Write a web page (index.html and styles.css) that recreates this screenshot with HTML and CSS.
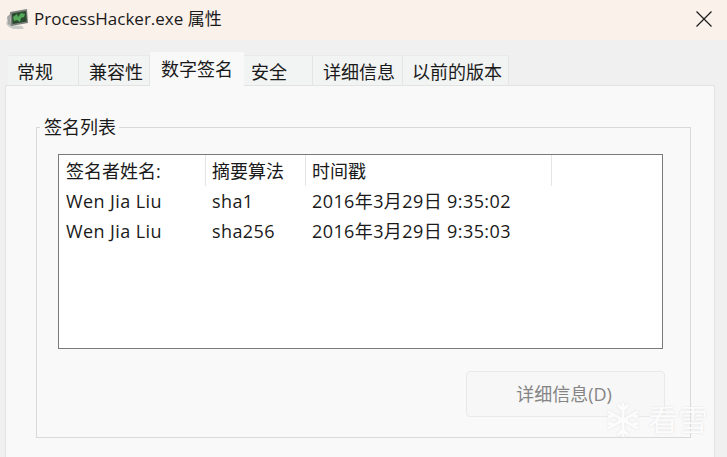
FILE: index.html
```html
<!DOCTYPE html>
<html lang="en">
  <head>
    <meta charset="UTF-8" />
    <title>ProcessHacker.exe 属性</title>
    <link rel="stylesheet" href="styles.css">
  </head>
  <body>
    <div class="dialog">
      <div class="title-bar">
        <svg class="app-icon" width="22" height="20" viewBox="0 0 22 20">
          <path fill="#c9cbc9" d="M1 12l4 1 1 3 10 1 2 3H7l-4-2-3-3z"></path>
          <path fill="#7c807c" d="M4 3l17-3 1 14-17 3z"></path>
          <path fill="#2a4a2e" d="M6 4.500l14-2.600 .8 10.500L6.500 15z"></path>
          <path fill="#56a85a" d="M7 8l4-3 1 3 3-4 4 1-1 3-3 1-1 4-3-2-3 1z"></path>
          <path fill="#a3a5a3" d="M1 8l3-3 1 12-3-2z"></path>
        </svg>
        <span class="title-text">ProcessHacker.exe 属性</span>
        <svg class="close-btn" width="16" height="16" viewBox="0 0 16 16">
          <path d="M0.500 0.500L15.500 15.500M15.500 0.500L0.500 15.500" stroke="#1a1a1a" stroke-width="1.200" fill="none"></path>
        </svg>
      </div>

      <div class="tabs">
        <div class="tab tab-general">常规</div>
        <div class="tab tab-compat">兼容性</div>
        <div class="tab tab-active">数字签名</div>
        <div class="tab tab-security">安全</div>
        <div class="tab tab-details">详细信息</div>
        <div class="tab tab-previous">以前的版本</div>
      </div>

      <div class="panel">
        <fieldset class="group">
          <legend class="group-label">签名列表</legend>
          <div class="list">
            <div class="list-row list-header">
              <div class="col col-name">签名者姓名:</div>
              <div class="col col-algo">摘要算法</div>
              <div class="col col-time">时间戳</div>
            </div>
            <div class="list-row">
              <div class="col col-name">Wen Jia Liu</div>
              <div class="col col-algo">sha1</div>
              <div class="col col-time">2016年3月29日 9:35:02</div>
            </div>
            <div class="list-row">
              <div class="col col-name">Wen Jia Liu</div>
              <div class="col col-algo">sha256</div>
              <div class="col col-time">2016年3月29日 9:35:03</div>
            </div>
          </div>
          <div class="actions">
            <button class="details-btn" type="button" disabled>详细信息(D)</button>
          </div>
        </fieldset>
      </div>

      <div class="watermark">
        <svg class="watermark-flake" width="34" height="36" viewBox="0 0 34 36">
          <path d="M17 1V35M2 9.500L32 26.500M32 9.500L2 26.500M17 8l-5-5M17 8l5-5M17 28l-5 5M17 28l5 5M8 13L2 15M26 13l6 2M8 23l-6-2M26 23l6-2M12 18h10" stroke="#fcfcfc" stroke-width="3" fill="none"></path>
        </svg>
        <span class="watermark-text">看雪</span>
      </div>
    </div>
  </body>
</html>
```

FILE: styles.css
```css
html,
body {
  margin: 0;
  padding: 0;
  height: 100%;
  overflow: hidden;
}

body {
  font-family: "Open Sans", "Noto Sans CJK SC", sans-serif;
  font-size: 18px;
  color: #1a1a1a;
  background-color: #f0f0f0;
}

.dialog {
  position: relative;
  height: 457px;
  display: flex;
  flex-direction: column;
}

/* Title bar */
.title-bar {
  height: 40px;
  flex-shrink: 0;
  padding: 0 15px 3px 6px;
  box-sizing: border-box;
  background-color: #faf1ea;
  display: flex;
  align-items: center;
}

.app-icon {
  margin-right: 6px;
}

.title-text {
  flex: 1;
  font-size: 17px;
  line-height: 24px;
}

/* Tabs */
.tabs {
  height: 30px;
  margin-top: 15px;
  padding-left: 8px;
  display: flex;
  align-items: flex-end;
}

.tab {
  height: 30px;
  box-sizing: border-box;
  padding-left: 9px;
  line-height: 33px;
  white-space: nowrap;
  background-color: #f2f3f3;
  border-right: 1px solid #e5e5e5;
  border-top: 1px solid #eaeaea;
}

.tab-general {
  width: 71px;
}

.tab-compat {
  width: 71px;
  padding-left: 10px;
}

.tab-active {
  width: 94px;
  height: 34px;
  margin-bottom: -1px;
  padding-left: 11px;
  line-height: 34px;
  background-color: #f9f9f9;
  border: none;
  position: relative;
  z-index: 1;
}

.tab-security {
  width: 69px;
  padding-left: 7px;
}

.tab-details {
  width: 90px;
  padding-left: 10px;
}

.tab-previous {
  width: 106px;
  padding-left: 9px;
}

/* Panel */
.panel {
  flex: 1;
  margin-left: 5px;
  width: 710px;
  box-sizing: border-box;
  padding: 29px 23px 19px 30px;
  background-color: #f9f9f9;
  border: 1px solid #e3e3e3;
  border-bottom: none;
  display: flex;
}

.group {
  flex: 1;
  min-width: 0;
  margin: 0;
  padding: 15px 26px 19px 21px;
  border: 1px solid #d9d9d9;
  display: flex;
  flex-direction: column;
}

.group-label {
  margin-left: -18px;
  padding: 0 3px 0 4px;
  line-height: 24px;
}

.list {
  height: 195px;
  width: 605px;
  box-sizing: border-box;
  background-color: #fff;
  border: 1px solid #7a7a7a;
}

.list-row {
  height: 30px;
  display: flex;
  line-height: 30px;
  letter-spacing: 0.4px;
}

.list-header {
  height: 31px;
  line-height: 33px;
  letter-spacing: 0;
}

.col {
  box-sizing: border-box;
  padding-left: 6px;
  white-space: nowrap;
}

.col-name {
  width: 147px;
  padding-left: 7px;
}

.col-algo {
  width: 100px;
}

.col-time {
  width: 246px;
}

.list-header .col {
  border-right: 1px solid #e5e5e5;
}

.actions {
  margin-top: 22px;
  display: flex;
  justify-content: flex-end;
  margin-right: -1px;
}

.details-btn {
  width: 199px;
  height: 46px;
  font: inherit;
  color: #858585;
  background-color: #f7f7f7;
  border: 1px solid #e9e9e9;
  border-radius: 4px;
  padding: 0 3px 3px 0;
}

/* Watermark */
.watermark {
  position: absolute;
  left: 606px;
  top: 402px;
  display: flex;
  align-items: center;
  gap: 8px;
}

.watermark-flake {
  filter: drop-shadow(0 0 1px #e2e2e2);
}

.watermark-text {
  font-size: 30px;
  line-height: 34px;
  color: #fcfcfc;
  text-shadow: 0 0 2px #dcdcdc;
}
```
